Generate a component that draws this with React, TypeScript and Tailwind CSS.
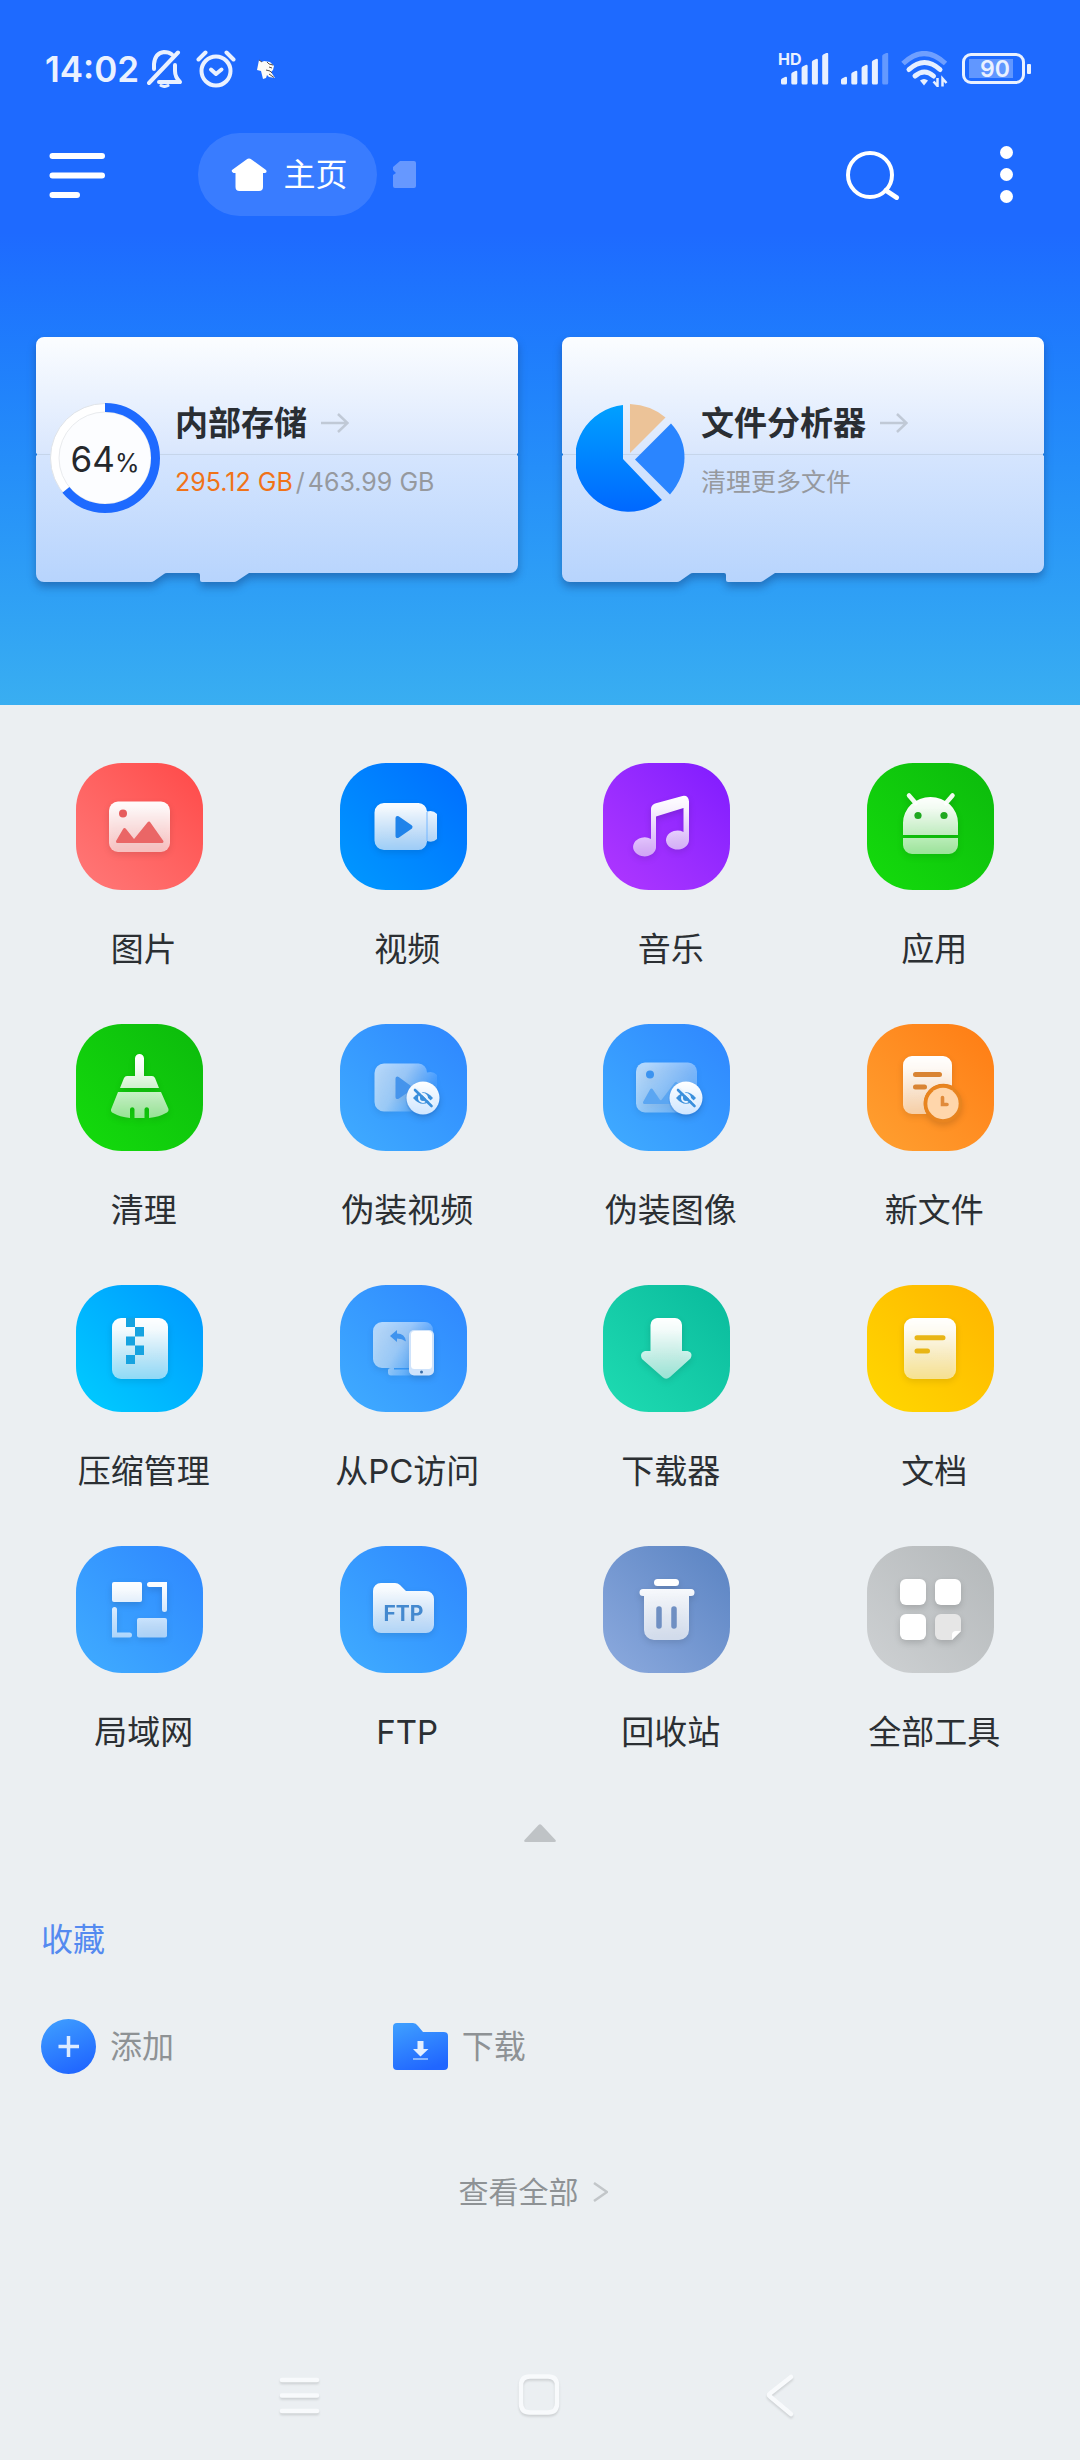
import type { ReactNode } from "react";
import clsx from "clsx";

interface Tool {
	label: string;
	tile: string;
	icon: ReactNode;
}

// 隐藏标记（眼睛 + 斜线）
function HiddenBadge() {
	return (
		<g>
			<circle cx="83" cy="75" r="17.500" fill="#1c6fd6" opacity="0.2" />
			<circle cx="83" cy="74" r="16.500" fill="url(#badge)" />
			<path d="M73 74q10-11.500 20 0q-10 11.500-20 0z" fill="#3a8fdc" />
			<circle cx="83" cy="74" r="4" fill="#3a8fdc" stroke="#e9f4ff" strokeWidth="2" />
			<path d="M76.500 64.500l17 16" stroke="#e9f4ff" strokeWidth="2" />
			<path d="M75 66l16.500 16" stroke="#3a8fdc" strokeWidth="2.600" strokeLinecap="round" />
		</g>
	);
}

const tools: Tool[] = [
	{
		label: "图片",
		tile: "from-[#ff4848] to-[#ff7878]",
		icon: (
			<>
				<rect x="33" y="38.500" width="61" height="50.500" rx="9" fill="url(#glyph)" />
				<circle cx="47" cy="50.500" r="4" fill="#e65c5c" />
				<path
					d="M41.500 78.500L48.500 66.500L58 78.500L73 60L86 78.500z"
					fill="#ea6666"
					stroke="#ea6666"
					strokeWidth="3"
					strokeLinejoin="round"
				/>
			</>
		),
	},
	{
		label: "视频",
		tile: "from-[#006cff] to-[#0099ff]",
		icon: (
			<>
				<path
					d="M44 40h34.500a9 9 0 0 1 8.500 8.500q6-2 10 2.500v25q-4 4-10 2v0.500a9 9 0 0 1-8.500 8.500h-34.500a9.500 9.500 0 0 1-9.500-9.500v-28a9.500 9.500 0 0 1 9.500-9.500z"
					fill="url(#glyph)"
				/>
				<path d="M87 49v29" stroke="#74b6ff" strokeWidth="1" />
				<path
					d="M57.500 55L70.500 64L57.500 73z"
					fill="#1f83ea"
					stroke="#1f83ea"
					strokeWidth="4"
					strokeLinejoin="round"
				/>
			</>
		),
	},
	{
		label: "音乐",
		tile: "from-[#8019ff] to-[#b036ff]",
		icon: (
			<path
				d="M48 76V46q0-4 4-5.500L79.500 33q6-1 6.500 5.500V77a11.500 9.500 0 1 1-5.500-8V45L53 53.500V85a11.500 9.500 0 1 1-5-9z"
				fill="url(#glyph)"
			/>
		),
	},
	{
		label: "应用",
		tile: "from-[#0cba0c] to-[#14dc0c]",
		icon: (
			<>
				<path d="M42 32.500l6.500 7.500M85.500 32.500L79 40" stroke="#f0fbf0" strokeWidth="4.500" strokeLinecap="round" />
				<path
					d="M36 72V60a27.500 26 0 0 1 55 0v12zM36 75h55v7a9 9 0 0 1-9 9h-37a9 9 0 0 1-9-9z"
					fill="url(#glyph)"
				/>
				<circle cx="51" cy="52.500" r="3.600" fill="#1fa81f" />
				<circle cx="77" cy="52.500" r="3.600" fill="#1fa81f" />
			</>
		),
	},
	{
		label: "清理",
		tile: "from-[#0cba0c] to-[#14dc0c]",
		icon: (
			<>
				<path
					d="M59 52V34.500a4.500 4.500 0 0 1 9 0V52h8q2 0 3 2l4 10H44l4-10q1-2 3-2z"
					fill="url(#glyph)"
				/>
				<path
					d="M42 68h43l7.500 17q0.500 2-1.500 3.500q-8 4.500-18 5.500V85a2.300 2.300 0 0 0-4.500 0V94h-10V85a2.300 2.300 0 0 0-4.500 0v9q-10-1-18-5.500q-1.500-1.500-1-3z"
					fill="url(#glyph)"
				/>
			</>
		),
	},
	{
		label: "伪装视频",
		tile: "from-[#2f86ff] to-[#40acff]",
		icon: (
			<>
				<path
					d="M44 39.500h34.500a9 9 0 0 1 8.500 9q6-2 10 2.500v25q-4 4-10 2a9 9 0 0 1-8.500 9.500h-34.500a9.500 9.500 0 0 1-9.500-9.500v-29a9.500 9.500 0 0 1 9.500-9.500z"
					fill="url(#fade)"
				/>
				<path d="M57.500 54.500L70.500 64L57.500 73z" fill="#4594ec" stroke="#4594ec" strokeWidth="4" strokeLinejoin="round" />
				<HiddenBadge />
			</>
		),
	},
	{
		label: "伪装图像",
		tile: "from-[#2f86ff] to-[#40acff]",
		icon: (
			<>
				<rect x="33" y="38.500" width="61" height="50" rx="9" fill="url(#fadeSoft)" />
				<circle cx="47" cy="50.500" r="4" fill="#3b93f0" />
				<path
					d="M41.500 78.500L48.500 66L56 77L58.500 78.500L73 59.500L86 78.500z"
					fill="#5ba6f2"
					stroke="#5ba6f2"
					strokeWidth="3"
					strokeLinejoin="round"
				/>
				<HiddenBadge />
			</>
		),
	},
	{
		label: "新文件",
		tile: "from-[#ff7c12] to-[#ffa030]",
		icon: (
			<>
				<path
					d="M45 32h31a9 9 0 0 1 9 9v20.500A20 20 0 0 0 59.500 90H45a9 9 0 0 1-9-9V41a9 9 0 0 1 9-9z"
					fill="url(#glyph)"
				/>
				<path d="M48.500 50.500h24M48.500 63h9" stroke="#d98433" strokeWidth="5" strokeLinecap="round" />
				<circle cx="76" cy="79.500" r="17.500" fill="none" stroke="#e8841f" strokeWidth="3.500" />
				<circle cx="76" cy="79.500" r="15.700" fill="#ffd6ab" />
				<path d="M75.500 73.500v7h4.500" stroke="#e08a3a" strokeWidth="3.600" strokeLinecap="round" fill="none" />
			</>
		),
	},
	{
		label: "压缩管理",
		tile: "from-[#0096ff] to-[#00cdff]",
		icon: (
			<>
				<rect x="36" y="33" width="56" height="61" rx="9" fill="url(#glyph)" />
				<path
					d="M50 33h9v9h-9zM59 42h9v9.500h-9zM50 51.500h9v9h-9zM59 60.500h9v9.500h-9zM50 70h9v9h-9z"
					fill="#16a3e0"
				/>
			</>
		),
	},
	{
		label: "从PC访问",
		tile: "from-[#2f86ff] to-[#40acff]",
		icon: (
			<>
				<path
					d="M42 37h43a8 8 0 0 1 8 8v38H54v1.500h18v6H51q-3 0-3-3v-2q0-2.500 3-2.500h-9a9 9 0 0 1-9-9V46a9 9 0 0 1 9-9z"
					fill="url(#fade)"
				/>
				<path d="M50 51l7-6v3.500q8 0 9 8q-4-3-9-3v3.500z" fill="#3f93ee" />
				<rect x="69" y="45" width="25" height="45.500" rx="5" fill="#cfe3fb" />
				<rect x="71" y="46" width="21" height="38" rx="3.500" fill="#fff" />
				<circle cx="81.500" cy="87" r="1.500" fill="#3a6ea8" />
			</>
		),
	},
	{
		label: "下载器",
		tile: "from-[#08ba9c] to-[#1edcb2]",
		icon: (
			<path
				d="M54 33h18a7 7 0 0 1 7 7v26h5.500q6 1.500 3 7.500L67 92q-4 3.500-7.500 0L39 74q-3-6 3-8h5.500V40a7 7 0 0 1 6.500-7z"
				fill="url(#glyph)"
			/>
		),
	},
	{
		label: "文档",
		tile: "from-[#ffb400] to-[#ffd800]",
		icon: (
			<>
				<rect x="37" y="33" width="52" height="61" rx="9" fill="url(#glyph)" />
				<path d="M50 52.800h26M50 66h10.500" stroke="#e8b515" strokeWidth="5" strokeLinecap="round" />
			</>
		),
	},
	{
		label: "局域网",
		tile: "from-[#2f86ff] to-[#40acff]",
		icon: (
			<>
				<rect x="36" y="36" width="30" height="20" rx="2" fill="url(#glyph)" />
				<rect x="61" y="72" width="30" height="19.500" rx="2" fill="url(#glyph)" />
				<path
					d="M73.500 38.500h15v25M38.500 63.500v25.500h15"
					stroke="url(#glyph)"
					strokeWidth="5"
					strokeLinecap="round"
					fill="none"
				/>
			</>
		),
	},
	{
		label: "FTP",
		tile: "from-[#2f86ff] to-[#40acff]",
		icon: (
			<>
				<path
					d="M41 37h14q3 0 5 2l6 6h20a8 8 0 0 1 8 8v26a8 8 0 0 1-8 8H41a8 8 0 0 1-8-8V45a8 8 0 0 1 8-8z"
					fill="url(#glyph)"
				/>
				<text x="63.500" y="75" textAnchor="middle" className="fill-[#4489cf] text-[21px] font-bold">
					FTP
				</text>
			</>
		),
	},
	{
		label: "回收站",
		tile: "from-[#5a83c2] to-[#8caade]",
		icon: (
			<>
				<rect x="51" y="33" width="25" height="7" rx="3.500" fill="#fff" />
				<path
					d="M40 43h48a3.400 3.400 0 0 1 0 7h-2v34a10 10 0 0 1-10 10H51a10 10 0 0 1-10-10V50h-1a3.400 3.400 0 0 1 0-7z"
					fill="url(#glyphStrong)"
				/>
				<path d="M56 63v17M71 63v17" stroke="#6f8fc2" strokeWidth="5.500" strokeLinecap="round" />
			</>
		),
	},
	{
		label: "全部工具",
		tile: "from-[#b4b8ba] to-[#ced1d3]",
		icon: (
			<>
				<rect x="33" y="33" width="26" height="26" rx="6" fill="#fff" />
				<rect x="68" y="33" width="26" height="26" rx="6" fill="#fff" />
				<rect x="33" y="68" width="26" height="26" rx="6" fill="#fff" />
				<path d="M74 68h14a6 6 0 0 1 6 6v11l-9 9H74a6 6 0 0 1-6-6V74a6 6 0 0 1 6-6z" fill="#e6e6e6" />
				<path d="M94 85l-9 9v-5q0-4 4-4z" fill="#fff" />
			</>
		),
	},
];

// 图标共用的渐变
function SharedGradients() {
	return (
		<svg className="absolute h-0 w-0" aria-hidden="true">
			<defs>
				<linearGradient id="glyph" gradientUnits="userSpaceOnUse" x1="0" y1="33" x2="0" y2="94">
					<stop offset="0" stopColor="#fff" />
					<stop offset="0.200" stopColor="#fff" stopOpacity="0.950" />
					<stop offset="1" stopColor="#fff" stopOpacity="0.560" />
				</linearGradient>
				<linearGradient id="glyphStrong" gradientUnits="userSpaceOnUse" x1="0" y1="33" x2="0" y2="94">
					<stop offset="0" stopColor="#fff" />
					<stop offset="1" stopColor="#fff" stopOpacity="0.680" />
				</linearGradient>
				<linearGradient id="fade" gradientUnits="userSpaceOnUse" x1="40" y1="46" x2="86" y2="74">
					<stop offset="0" stopColor="#fff" stopOpacity="0.620" />
					<stop offset="0.450" stopColor="#fff" stopOpacity="0.500" />
					<stop offset="1" stopColor="#fff" stopOpacity="0.080" />
				</linearGradient>
				<linearGradient id="fadeSoft" gradientUnits="userSpaceOnUse" x1="45" y1="40" x2="88" y2="76">
					<stop offset="0" stopColor="#fff" stopOpacity="0.620" />
					<stop offset="1" stopColor="#fff" stopOpacity="0.250" />
				</linearGradient>
				<linearGradient id="badge" x1="0" y1="0" x2="0" y2="1">
					<stop offset="0" stopColor="#fff" />
					<stop offset="1" stopColor="#cfe6ff" />
				</linearGradient>
				<linearGradient id="card" x1="0" y1="0" x2="0" y2="1">
					<stop offset="0" stopColor="#fbfdff" />
					<stop offset="0.470" stopColor="#dae7fd" />
					<stop offset="0.480" stopColor="#d5e5fe" />
					<stop offset="1" stopColor="#b7d4fd" />
				</linearGradient>
				<linearGradient id="pie" x1="0" y1="0" x2="0" y2="1">
					<stop offset="0" stopColor="#00a0ff" />
					<stop offset="1" stopColor="#0068ff" />
				</linearGradient>
				<linearGradient id="blue" x1="0.200" y1="0" x2="0.600" y2="1">
					<stop offset="0" stopColor="#3e9dff" />
					<stop offset="1" stopColor="#2066ff" />
				</linearGradient>
			</defs>
		</svg>
	);
}

function SignalBars({ level }: { level: number }) {
	return (
		<svg className="h-[32px] w-[48px]" viewBox="0 0 48 32" fill="#e8f0ff">
			{[0, 1, 2, 3, 4].map((i) => {
				const top = 24 - i * 6;
				return (
					<path
						key={i}
						d={`M${i * 10.3} ${top + 3}q0-1 1-1.500l3-1.500q2-0.800 2 1V30q0 1.500-1.500 1.500h-3q-1.500 0-1.500-1.500z`}
						opacity={i < level ? 1 : 0.35}
					/>
				);
			})}
		</svg>
	);
}

function StatusBar() {
	return (
		<div className="flex h-[133px] items-center pr-[49px] pl-[45px] pt-1 text-[#eaf1ff]">
			<span className="text-[35px] leading-[48px] font-semibold">14:02</span>
			<svg
				className="ml-2 h-[38px] w-[36px]"
				viewBox="0 0 36 38"
				fill="none"
				stroke="currentColor"
				strokeWidth="4"
				strokeLinecap="round"
				strokeLinejoin="round"
			>
				<path d="M2 33L31 2.500" />
				<path d="M7 19V14Q8 3 17 2q5 0 8 2.500" />
				<path d="M28 15v6q0 6 5 11H12" />
				<path d="M14 35.500q3.500 2 7 0" strokeWidth="3" />
			</svg>
			<svg
				className="ml-[13px] h-[38px] w-[40px]"
				viewBox="0 0 40 38"
				fill="none"
				stroke="currentColor"
				strokeWidth="4"
				strokeLinecap="round"
				strokeLinejoin="round"
			>
				<circle cx="20" cy="21" r="14.500" />
				<path d="M2.500 9.500l7-7M37.500 9.500l-7-7" />
				<path d="M15 19.500l5 4.500l5.500-4.500" />
			</svg>
			<svg className="ml-5 h-[20px] w-[20px]" viewBox="0 0 20 20">
				<path d="M3 1l3 2l2-1l6 1l4 4l-1 4l-2 2l4 6l-6-1l-2-2l-1 3l-3 1l-2-8l-4-1z" fill="#fdfbf7" />
				<path
					d="M11 3l2 2l4 1M13 8l3 1M10 11l4 1l2 2M13 15l5 3.500M3 1l3 2"
					stroke="#59504c"
					strokeWidth="1"
					fill="none"
				/>
			</svg>

			<div className="ml-auto flex items-center">
				<div className="relative">
					<span className="absolute -top-1 -left-[3px] text-[16px] leading-[20px] font-bold">HD</span>
					<SignalBars level={5} />
				</div>
				<div className="ml-3">
					<SignalBars level={4} />
				</div>
				<svg className="ml-3 h-[36px] w-[47px]" viewBox="0 0 47 36" fill="none" stroke="#e8f0ff" strokeWidth="5">
					<path d="M2 12.500q21-20 42.500 0" opacity="0.400" />
					<path d="M8 18.500q15.500-14 31 0" strokeLinecap="round" />
					<path d="M14 25q9.500-8 18.500 0" strokeLinecap="round" />
					<path d="M19 29.500q4-3 8 0l-4 5z" fill="#e8f0ff" stroke="none" />
					<path d="M36.500 27v8l-4-4.500M41.500 35.500v-8l4 4.500" strokeWidth="2.500" />
				</svg>
				<div className="ml-[14px] flex items-center gap-[2px]">
					<div className="flex h-[31px] w-[63px] items-center rounded-[9px] border-3 border-current p-1">
						<span className="flex h-[19px] w-[44px] items-center justify-center bg-white/30 pl-2 text-[23px] leading-[20px] font-semibold">
							90
						</span>
					</div>
					<span className="h-[10px] w-1 rounded-[1px] bg-current" />
				</div>
			</div>
		</div>
	);
}

function Toolbar() {
	return (
		<div className="flex h-[83px] items-center pr-[61px] pl-[49px]">
			<button type="button" aria-label="菜单">
				<svg className="h-[46px] w-[57px]" viewBox="0 0 57 46" stroke="#fff" strokeWidth="6" strokeLinecap="round">
					<path d="M3.500 4h49.500M3.500 23.500h49.500M3.500 43h24.500" />
				</svg>
			</button>
			<button
				type="button"
				className="ml-[92px] flex h-[83px] w-[179px] items-center justify-center gap-4 rounded-full bg-white/12 pl-1 text-white"
			>
				<svg className="h-[33px] w-[36px]" viewBox="0 0 36 33" fill="currentColor">
					<path d="M15.500 1.500q2.500-2 5 0L35 12q1.500 2.500-1 3h-2v14q0 4-4 4H8.500q-4 0-4-4V15h-2Q0 14 1 12z" />
				</svg>
				<span className="text-[32px] leading-[48px]">主页</span>
			</button>
			<svg className="ml-4 h-[27px] w-[23px]" viewBox="0 0 23 27" fill="#6698ff">
				<path d="M7 0h14q2 0 2 2v23q0 2-2 2H2q-2 0-2-2V14l3-2l-3-3V6z" />
			</svg>
			<div className="ml-auto flex items-center gap-[93px]">
				<button type="button" aria-label="搜索">
					<svg className="h-[50px] w-[54px]" viewBox="0 0 54 50" fill="none" stroke="#fff">
						<circle cx="24" cy="25" r="22" strokeWidth="4" />
						<path d="M40 40.500l10.500 7" strokeWidth="5" strokeLinecap="round" />
					</svg>
				</button>
				<button type="button" aria-label="更多" className="flex w-[26px] flex-col items-center gap-[9px]">
					<span className="size-[13px] rounded-full bg-white" />
					<span className="size-[13px] rounded-full bg-white" />
					<span className="size-[13px] rounded-full bg-white" />
				</button>
			</div>
		</div>
	);
}

function ArrowRight() {
	return (
		<svg className="h-[20px] w-[28px]" viewBox="0 0 28 20" fill="none" stroke="#c0c9d6" strokeWidth="2.500">
			<path d="M0 10h26M17 1l9.500 9l-9.500 9" />
		</svg>
	);
}

function StorageCard({ title, graphic, children }: { title: string; graphic: ReactNode; children: ReactNode }) {
	return (
		<a href="#" className="relative flex h-[245px] flex-1 items-start">
			<svg
				className="absolute inset-0 h-full w-full drop-shadow-[0_5px_4px_rgba(20,60,120,0.45)]"
				viewBox="0 0 482 245"
				preserveAspectRatio="none"
				aria-hidden="true"
			>
				<path
					d="M8 0H474a8 8 0 0 1 8 8V116l-1.500 1.500l1.500 1.500V228a8 8 0 0 1-8 8H213L201 244q-1.500 1-3 1H166q-2 0-2-2v-5q0-2-2-2H131q-2 0-3 1L118 244q-1.500 1-3 1H8a8 8 0 0 1-8-8V119l1.500-1.500L0 116V8a8 8 0 0 1 8-8z"
					fill="url(#card)"
				/>
				<path d="M1 117.500H481" stroke="#c6d5ea" strokeWidth="1" />
			</svg>
			<div className="relative mt-[66px] ml-[14px] size-[110px]">{graphic}</div>
			<div className="relative mt-[62px] ml-[15px]">
				<div className="flex items-center gap-[14px]">
					<h2 className="text-[33px] leading-[48px] font-bold text-[#2a2e33]">{title}</h2>
					<ArrowRight />
				</div>
				<p className="mt-[15px] text-[25px] leading-[40px] text-[#96999e]">{children}</p>
			</div>
		</a>
	);
}

function UsageRing({ percent }: { percent: number }) {
	const circumference = 2 * Math.PI * 50.5;
	return (
		<div className="relative size-[110px]">
			<svg className="h-full w-full -rotate-90" viewBox="0 0 110 110">
				<circle cx="55" cy="55" r="54.500" fill="#fff" stroke="#dfe3e8" />
				<circle cx="55" cy="55" r="46" fill="#fcfdff" stroke="#e9ebee" />
				<circle
					cx="55"
					cy="55"
					r="50.500"
					fill="none"
					stroke="#1e6aff"
					strokeWidth="9"
					strokeDasharray={circumference}
					strokeDashoffset={circumference * (1 - percent / 100)}
				/>
			</svg>
			<div className="absolute inset-0 flex items-baseline justify-center pt-8 text-[#25282c]">
				<span className="text-[35px] leading-[48px]">{percent}</span>
				<span className="text-[25px] leading-[48px]">%</span>
			</div>
		</div>
	);
}

function PieGraphic() {
	return (
		<svg className="h-full w-full" viewBox="0 0 110 110">
			<path d="M47 2A53.500 53.500 0 1 0 86 97L47 56z" fill="url(#pie)" />
			<path d="M54 1q21 1 35.500 13.500L54 50z" fill="#ecc398" />
			<path d="M95 20.500q13.500 14.500 13.500 34q0 20-14.500 37L59 56.500z" fill="#2a85ff" />
		</svg>
	);
}

const labelClass = "text-[32px] leading-[48px]";

export default function App() {
	return (
		<div className="flex min-h-screen flex-col bg-[#ebeff2] font-['Inter','Noto_Sans_CJK_SC',sans-serif]">
			<SharedGradients />

			{/* 顶部区域 */}
			<header className="bg-linear-to-b from-[#1e6aff] from-33% to-[#39aef1] pb-[123px]">
				<StatusBar />
				<Toolbar />
				<div className="mt-[121px] flex gap-11 px-9">
					<StorageCard title="内部存储" graphic={<UsageRing percent={64} />}>
						<span className="text-[#f07318]">295.12 GB</span>
						<span className="mx-[3px]">/</span>463.99 GB
					</StorageCard>
					<StorageCard title="文件分析器" graphic={<PieGraphic />}>
						清理更多文件
					</StorageCard>
				</div>
			</header>

			<main>
				{/* 工具网格 */}
				<div className="grid grid-cols-4 gap-y-[51px] pt-[58px] pr-[14px] pl-3">
					{tools.map((tool) => (
						<a key={tool.label} href="#" className="flex flex-col items-center">
							<span className={clsx("mr-2 size-[127px] rounded-[46px] bg-linear-to-bl", tool.tile)}>
								<svg className="h-full w-full drop-shadow-[0_3px_3px_rgba(0,0,0,0.15)]" viewBox="0 0 127 127">
									{tool.icon}
								</svg>
							</span>
							<span className="mt-[35px] text-[33px] leading-[48px] text-[#2b2f33]">{tool.label}</span>
						</a>
					))}
				</div>

				<button type="button" aria-label="收起" className="mx-auto mt-[68px] block">
					<svg className="h-[18px] w-[32px]" viewBox="0 0 32 18">
						<path d="M14.500 1q1.500-1.500 3 0L31.500 16q1 2-1 2H1.500q-2 0-1-2z" fill="#bfc3c6" />
					</svg>
				</button>

				{/* 收藏 */}
				<section className="mt-[74px] pl-[41px]">
					<h2 className={clsx(labelClass, "text-[#548af0]")}>收藏</h2>
					<div className="mt-[55px] grid grid-cols-3 gap-4 text-[#8e9295]">
						<button type="button" className="flex items-center gap-[14px]">
							<svg className="size-[55px]" viewBox="0 0 55 55">
								<circle cx="27.500" cy="27.500" r="27.500" fill="url(#blue)" />
								<path d="M27.500 17v21M17.500 27.500h20.500" stroke="#dcebff" strokeWidth="3.500" />
							</svg>
							<span className={labelClass}>添加</span>
						</button>
						<button type="button" className="flex items-center gap-[14px]">
							<svg className="h-[47px] w-[55px]" viewBox="0 0 55 47">
								<path
									d="M4 0h16q3 0 5 3l5 6h21q4 0 4 4v30q0 4-4 4H4q-4 0-4-4V4q0-4 4-4z"
									fill="url(#blue)"
								/>
								<path d="M24.500 18h6v8h5L27.500 33.500L20 26h4.500z" fill="#e4efff" />
								<path d="M20 36h15" stroke="#a9ccff" strokeWidth="1.500" />
							</svg>
							<span className={labelClass}>下载</span>
						</button>
					</div>
				</section>

				<a href="#" className="mt-[94px] flex items-center justify-center gap-[14px] pr-[14px] text-[#8e9295]">
					<span className="text-[30px] leading-[48px]">查看全部</span>
					<svg className="h-[20px] w-[15px]" viewBox="0 0 15 20" fill="none" stroke="#c2c6c9" strokeWidth="2.500">
						<path d="M1 1l13 9L1 19" />
					</svg>
				</a>
			</main>

			{/* 系统导航栏 */}
			<nav className="mx-auto mt-auto grid h-[130px] w-2/3 grid-cols-3 items-center justify-items-center">
				{[
					{ name: "最近任务", d: "M5 8h35M5 23.500h35M5 39h35" },
					{ name: "主屏幕", d: "M13 4.500h18q9 0 9 9v18q0 9-9 9H13q-9 0-9-9v-18q0-9 9-9z" },
					{ name: "返回", d: "M34 5L13 21.500q-2 1.500 0 3L34 42" },
				].map((item) => (
					<button key={item.name} type="button" aria-label={item.name}>
						<svg
							className="size-[46px] drop-shadow-[0_2px_1px_rgba(0,0,0,0.12)]"
							viewBox="0 0 46 46"
							fill="none"
							stroke="#f8fafc"
							strokeWidth="4.500"
							strokeLinecap="round"
						>
							<path d={item.d} />
						</svg>
					</button>
				))}
			</nav>
		</div>
	);
}
